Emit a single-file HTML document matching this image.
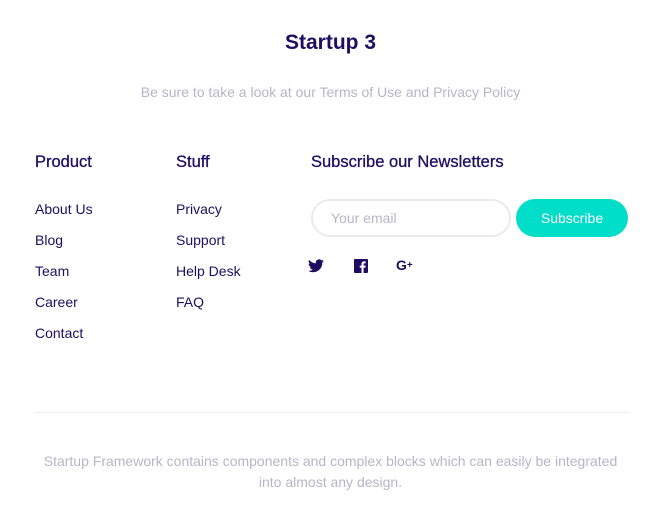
<!DOCTYPE html>
<html><head><style>
body{margin:0;width:661px;height:529px;background:#fff;font-family:"Liberation Sans",sans-serif;position:relative;overflow:hidden}
.a{position:absolute;white-space:nowrap}
h1{position:absolute;left:0;width:661px;text-align:center;top:31px;margin:0;font-size:21px;color:#1e0e62;font-weight:bold}
.sub{left:0;width:661px;text-align:center;top:84px;font-size:14px;color:#b7b5c8}
.h{font-size:16.5px;color:#1e0e62;top:153px;-webkit-text-stroke:0.3px #1e0e62}
.l{font-size:14px;color:#1e0e62}
.inp{position:absolute;left:311px;top:199px;width:196px;height:34px;border:2px solid #ebeaed;border-radius:19px}
.inp span{position:absolute;left:18px;top:9px;font-size:14px;color:#b7b5c8}
.btn{position:absolute;left:516px;top:199px;width:112px;height:38px;border-radius:19px;background:#00ddc8;color:#fff;font-size:14px;text-align:center;line-height:38px}
.hr{position:absolute;left:35px;top:412px;width:593px;height:1px;background:#ebeaed}
.foot{left:0;width:661px;text-align:center;top:451px;font-size:14px;color:#b7b5c8;line-height:21px;white-space:normal}
</style></head><body>
<h1>Startup 3</h1>
<div class="a sub">Be sure to take a look at our Terms of Use and Privacy Policy</div>
<div class="a h" style="left:35px">Product</div>
<div class="a h" style="left:176px">Stuff</div>
<div class="a h" style="left:311px">Subscribe our Newsletters</div>
<div class="a l" style="left:35px;top:201px">About Us</div>
<div class="a l" style="left:35px;top:232px">Blog</div>
<div class="a l" style="left:35px;top:263px">Team</div>
<div class="a l" style="left:35px;top:294px">Career</div>
<div class="a l" style="left:35px;top:325px">Contact</div>
<div class="a l" style="left:176px;top:201px">Privacy</div>
<div class="a l" style="left:176px;top:232px">Support</div>
<div class="a l" style="left:176px;top:263px">Help Desk</div>
<div class="a l" style="left:176px;top:294px">FAQ</div>
<div class="inp"><span>Your email</span></div>
<div class="btn">Subscribe</div>
<svg class="a" style="left:308px;top:259px" width="16" height="14" viewBox="0 0 24 20"><path fill="#1e0e62" d="M24 2.4a10 10 0 0 1-2.8.8A5 5 0 0 0 23.3.4a10 10 0 0 1-3.1 1.2A4.9 4.9 0 0 0 11.8 6 14 14 0 0 1 1.7.9a4.9 4.9 0 0 0 1.5 6.6 5 5 0 0 1-2.2-.6 4.9 4.9 0 0 0 3.9 4.8 5 5 0 0 1-2.2.1 4.9 4.9 0 0 0 4.6 3.4A9.9 9.9 0 0 1 0 17.2 14 14 0 0 0 7.5 19.4c9.1 0 14-7.5 14-14v-.6A10 10 0 0 0 24 2.4z"/></svg>
<svg class="a" style="left:354px;top:259px" width="14" height="14" viewBox="0 0 14 14"><rect width="14" height="14" rx="1" fill="#1e0e62"/><path fill="#fff" d="M9.6 14V8.6h1.8l.3-2H9.6V5.3c0-.6.2-1 1-1h1.1V2.5c-.2 0-.9-.1-1.6-.1-1.6 0-2.6 1-2.6 2.7v1.5H5.7v2h1.8V14z"/></svg>
<div class="a" style="left:396px;top:257px;font-size:14px;font-weight:bold;color:#1e0e62">G<span style="font-size:10px;vertical-align:2px">+</span></div>
<div class="hr"></div>
<div class="a foot">Startup Framework contains components and complex blocks which can easily be integrated<br>into almost any design.</div>
</body></html>
